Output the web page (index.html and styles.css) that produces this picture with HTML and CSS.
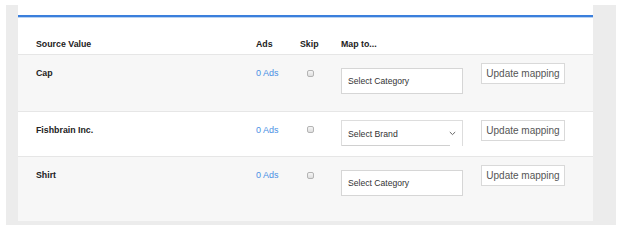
FILE: index.html
```html
<!DOCTYPE html>
<html lang="en">
<head>
    <meta charset="UTF-8">
    <meta name="viewport" content="width=device-width, initial-scale=1.0">
    <title>Mapping</title>
    <link rel="stylesheet" href="styles.css">
</head>
<body>
    <div class="page">
        <div class="panel">
            <div class="panel-bar"></div>
            <div class="row-grid grid-head">
                <div>Source Value</div>
                <div>Ads</div>
                <div>Skip</div>
                <div>Map to...</div>
                <div></div>
            </div>

            <div class="row-grid map-row row-alt">
                <div class="cell-label">Cap</div>
                <div class="cell-label"><a class="ads-link" href="#">0 Ads</a></div>
                <div><input type="checkbox" class="skip-box"></div>
                <div><div class="picker">Select Category</div></div>
                <div><button class="update-btn">Update mapping</button></div>
            </div>

            <div class="row-grid map-row row-brand">
                <div class="cell-label">Fishbrain Inc.</div>
                <div class="cell-label"><a class="ads-link" href="#">0 Ads</a></div>
                <div><input type="checkbox" class="skip-box skip-box-tight"></div>
                <div>
                    <div class="brand-select">
                        <span>Select Brand</span>
                        <svg width="7" height="5" viewBox="0 0 7 5"><path d="M0.8 1 L3.5 3.6 L6.2 1" fill="none" stroke="#666" stroke-width="1"/></svg>
                    </div>
                </div>
                <div><button class="update-btn">Update mapping</button></div>
            </div>

            <div class="row-grid map-row row-alt row-last">
                <div class="cell-label">Shirt</div>
                <div class="cell-label"><a class="ads-link" href="#">0 Ads</a></div>
                <div><input type="checkbox" class="skip-box"></div>
                <div><div class="picker">Select Category</div></div>
                <div><button class="update-btn">Update mapping</button></div>
            </div>
        </div>
    </div>
</body>
</html>
```

FILE: styles.css
```css
body {
    margin: 0;
    padding: 5px 6px 0;
    font-family: "Liberation Sans", Arial, sans-serif;
    background-color: #ffffff;
    color: #222222;
}

.page {
    width: 575px;
    padding: 0 23px 4px 12px;
    background-color: #ececec;
}

.panel {
    height: 216px;
    box-sizing: border-box;
    padding-top: 10px;
    background-color: #ffffff;
    display: flex;
    flex-direction: column;
}

.panel-bar {
    height: 2px;
    background-color: #3b7fdc;
    border-bottom: 1px solid #b9d3f3;
}

.row-grid {
    display: grid;
    grid-template-columns: 220px 44px 41px 140px 1fr;
    padding-left: 18px;
}

.grid-head {
    padding-top: 21px;
    padding-bottom: 4px;
    font-size: 8.8px;
    line-height: 11px;
    font-weight: bold;
}

.map-row {
    box-sizing: border-box;
    height: 57px;
    padding-top: 8px;
    border-top: 1px solid #e6e6e6;
}

.row-alt {
    background-color: #f7f7f7;
}

.row-brand {
    height: 45px;
}

.row-last {
    flex: 1;
}

.cell-label {
    padding-top: 5px;
    font-size: 8.8px;
    line-height: 11px;
    font-weight: bold;
}

.ads-link {
    font-size: 9px;
    font-weight: normal;
    color: #4a8fe4;
    text-decoration: none;
}

.skip-box {
    appearance: none;
    width: 7px;
    height: 7px;
    margin: 7px 0 0 7px;
    box-sizing: border-box;
    border: 1px solid #b4b4b4;
    border-radius: 2px;
    background: linear-gradient(#f6f6f6, #dedede);
    display: block;
}

.skip-box-tight {
    margin-top: 6px;
}

.picker {
    width: 122px;
    height: 26px;
    margin-top: 5px;
    box-sizing: border-box;
    padding-left: 6px;
    border: 1px solid #d6d6d6;
    background-color: #ffffff;
    font-size: 8.6px;
    line-height: 25px;
    color: #333333;
}

.brand-select {
    width: 122px;
    height: 26px;
    box-sizing: border-box;
    padding: 0 6px 0 6px;
    border: 1px solid #dddddd;
    border-bottom: none;
    background: #ffffff linear-gradient(#d0d0d0, #d0d0d0) no-repeat left bottom / 108px 1px;
    display: flex;
    justify-content: space-between;
    align-items: center;
    font-size: 8.7px;
    color: #333333;
}

.update-btn {
    width: 84px;
    height: 21px;
    padding: 0;
    border: 1px solid #d9d9d9;
    background-color: #ffffff;
    font-family: "Liberation Sans", Arial, sans-serif;
    font-size: 10px;
    color: #555555;
    cursor: pointer;
}
```
